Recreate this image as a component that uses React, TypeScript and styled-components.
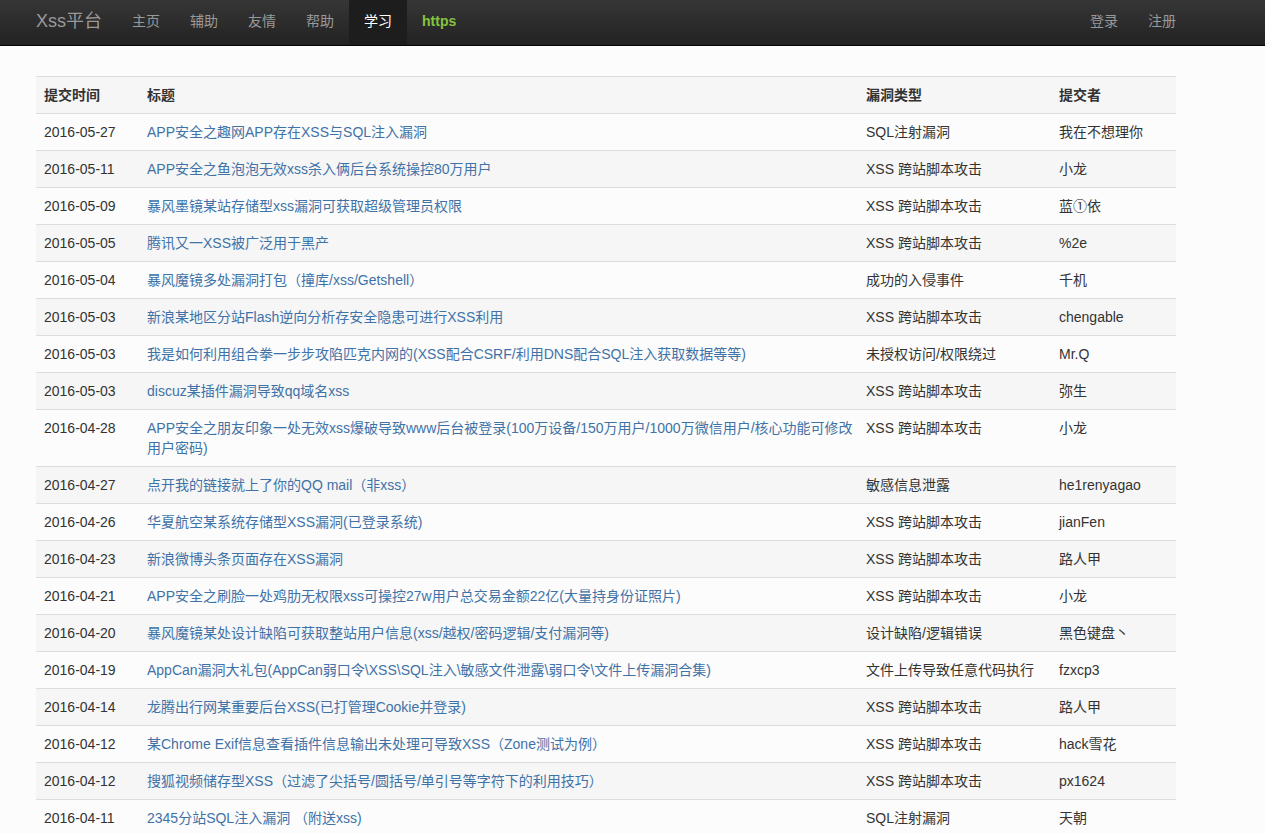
import React from 'react'
import styled, { createGlobalStyle } from 'styled-components'

const GlobalStyle = createGlobalStyle`
  html, body {
    margin: 0;
    padding: 0;
    background: #fcfcfc;
    font-family: 'Liberation Sans', Arial, 'Noto Sans CJK SC', sans-serif;
    font-size: 14px;
    line-height: 20px;
    color: #333;
  }
`

const NavBar = styled.div`
  height: 45px;
  background: linear-gradient(to bottom, #363636, #222222);
  border-bottom: 1px solid #050505;
`

const NavInner = styled.div`
  width: 1170px;
  margin-left: 21px;
  display: flex;
  justify-content: space-between;
  height: 100%;
`

const NavGroup = styled.div`
  display: flex;
  align-items: stretch;
`

const Brand = styled.a`
  padding: 10px 15px 0;
  font-size: 18px;
  line-height: 22px;
  color: #999;
  text-decoration: none;
  cursor: pointer;
`

const NavLink = styled.a<{ $active?: boolean; $green?: boolean }>`
  padding: 11px 15px 0;
  font-size: 14px;
  color: ${(p) => (p.$active ? '#fff' : p.$green ? '#86c440' : '#999')};
  font-weight: ${(p) => (p.$green ? 'bold' : 'normal')};
  background: ${(p) => (p.$active ? '#1d1d1d' : 'transparent')};
  text-decoration: none;
  cursor: pointer;
`

const Main = styled.div`
  width: 1140px;
  margin-left: 36px;
  padding-top: 30px;
`

const Table = styled.table`
  width: 100%;
  table-layout: fixed;
  border-collapse: collapse;
  border-spacing: 0;
`

const Row = styled.tr`
  &:nth-child(odd) {
    background: #f6f6f6;
  }
`

const Cell = styled.td<{ $head?: boolean; $w?: number; $tight?: boolean }>`
  width: ${(p) => (p.$w ? `${p.$w - 16}px` : 'auto')};
  padding: 8px;
  padding-right: ${(p) => (p.$tight ? '3px' : '8px')};
  border-top: 1px solid #ddd;
  vertical-align: top;
  text-align: left;
  font-weight: ${(p) => (p.$head ? 'bold' : 'normal')};
  color: #333;
`

const TitleLink = styled.a`
  color: #3f72a7;
  text-decoration: none;
  cursor: pointer;
`

type Report = {
  date: string
  title: string
  kind: string
  author: string
}

const xss = 'XSS 跨站脚本攻击'

const reports: Report[] = [
  { date: '2016-05-27', title: 'APP安全之趣网APP存在XSS与SQL注入漏洞', kind: 'SQL注射漏洞', author: '我在不想理你' },
  { date: '2016-05-11', title: 'APP安全之鱼泡泡无效xss杀入俩后台系统操控80万用户', kind: xss, author: '小龙' },
  { date: '2016-05-09', title: '暴风墨镜某站存储型xss漏洞可获取超级管理员权限', kind: xss, author: '蓝①依' },
  { date: '2016-05-05', title: '腾讯又一XSS被广泛用于黑产', kind: xss, author: '%2e' },
  { date: '2016-05-04', title: '暴风魔镜多处漏洞打包（撞库/xss/Getshell）', kind: '成功的入侵事件', author: '千机' },
  { date: '2016-05-03', title: '新浪某地区分站Flash逆向分析存安全隐患可进行XSS利用', kind: xss, author: 'chengable' },
  { date: '2016-05-03', title: '我是如何利用组合拳一步步攻陷匹克内网的(XSS配合CSRF/利用DNS配合SQL注入获取数据等等)', kind: '未授权访问/权限绕过', author: 'Mr.Q' },
  { date: '2016-05-03', title: 'discuz某插件漏洞导致qq域名xss', kind: xss, author: '弥生' },
  { date: '2016-04-28', title: 'APP安全之朋友印象一处无效xss爆破导致www后台被登录(100万设备/150万用户/1000万微信用户/核心功能可修改用户密码)', kind: xss, author: '小龙' },
  { date: '2016-04-27', title: '点开我的链接就上了你的QQ mail（非xss）', kind: '敏感信息泄露', author: 'he1renyagao' },
  { date: '2016-04-26', title: '华夏航空某系统存储型XSS漏洞(已登录系统)', kind: xss, author: 'jianFen' },
  { date: '2016-04-23', title: '新浪微博头条页面存在XSS漏洞', kind: xss, author: '路人甲' },
  { date: '2016-04-21', title: 'APP安全之刷脸一处鸡肋无权限xss可操控27w用户总交易金额22亿(大量持身份证照片)', kind: xss, author: '小龙' },
  { date: '2016-04-20', title: '暴风魔镜某处设计缺陷可获取整站用户信息(xss/越权/密码逻辑/支付漏洞等)', kind: '设计缺陷/逻辑错误', author: '黑色键盘丶' },
  { date: '2016-04-19', title: 'AppCan漏洞大礼包(AppCan弱口令\\XSS\\SQL注入\\敏感文件泄露\\弱口令\\文件上传漏洞合集)', kind: '文件上传导致任意代码执行', author: 'fzxcp3' },
  { date: '2016-04-14', title: '龙腾出行网某重要后台XSS(已打管理Cookie并登录)', kind: xss, author: '路人甲' },
  { date: '2016-04-12', title: '某Chrome Exif信息查看插件信息输出未处理可导致XSS（Zone测试为例）', kind: xss, author: 'hack雪花' },
  { date: '2016-04-12', title: '搜狐视频储存型XSS（过滤了尖括号/圆括号/单引号等字符下的利用技巧）', kind: xss, author: 'px1624' },
  { date: '2016-04-11', title: '2345分站SQL注入漏洞 （附送xss)', kind: 'SQL注射漏洞', author: '天朝' },
]

const leftLinks = ['主页', '辅助', '友情', '帮助']

export default function App() {
  return (
    <>
      <GlobalStyle />
      <NavBar>
        <NavInner>
          <NavGroup>
            <Brand>Xss平台</Brand>
            {leftLinks.map((l) => (
              <NavLink key={l}>{l}</NavLink>
            ))}
            <NavLink $active>学习</NavLink>
            <NavLink $green>https</NavLink>
          </NavGroup>
          <NavGroup>
            <NavLink>登录</NavLink>
            <NavLink>注册</NavLink>
          </NavGroup>
        </NavInner>
      </NavBar>
      <Main>
        <Table>
          <tbody>
            <Row>
              <Cell $head $w={103}>提交时间</Cell>
              <Cell $head $tight>标题</Cell>
              <Cell $head $w={193}>漏洞类型</Cell>
              <Cell $head $w={125}>提交者</Cell>
            </Row>
            {reports.map((r, i) => (
              <Row key={i}>
                <Cell>{r.date}</Cell>
                <Cell $tight>
                  <TitleLink>{r.title}</TitleLink>
                </Cell>
                <Cell>{r.kind}</Cell>
                <Cell>{r.author}</Cell>
              </Row>
            ))}
          </tbody>
        </Table>
      </Main>
    </>
  )
}
